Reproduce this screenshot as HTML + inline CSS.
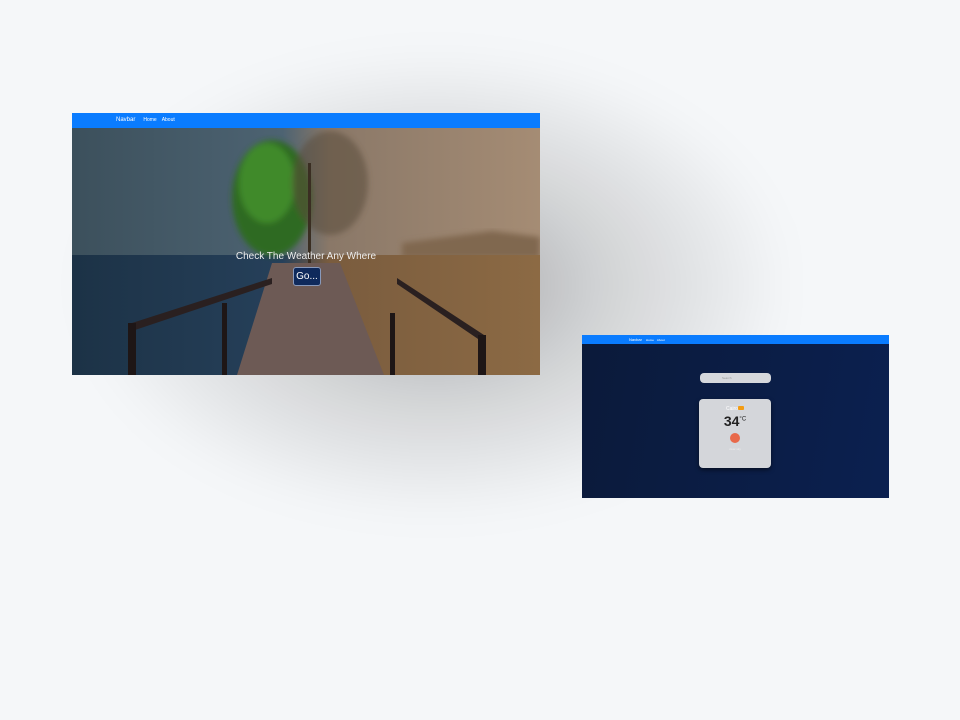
<!DOCTYPE html>
<html><head><meta charset="utf-8"><style>
body{margin:0;width:960px;height:720px;background:#f5f7f9;position:relative;overflow:hidden;font-family:"Liberation Sans",sans-serif}
.sh{position:absolute;left:60px;top:50px;width:720px;height:470px;background:radial-gradient(ellipse 50% 50% at 52% 50%,rgba(0,0,0,.34),rgba(0,0,0,.15) 45%,rgba(0,0,0,0) 100%);filter:blur(20px)}
.a{position:absolute;left:72px;top:113px;width:468px;height:262px;overflow:hidden}
.nav{position:absolute;left:0;top:0;width:100%;background:#0a7cff;color:#fff}
.b{position:absolute;left:582px;top:335px;width:307px;height:163px;background:linear-gradient(100deg,#0b1a3a,#0b2050);overflow:hidden}
</style></head><body>
<div class="sh"></div>
<div class="a">
<svg width="468" height="262" viewBox="0 0 468 262" style="position:absolute;left:0;top:0">
<defs>
<linearGradient id="sky" x1="0" x2="1"><stop offset="0" stop-color="#3c505c"/><stop offset=".45" stop-color="#4d6372"/><stop offset=".55" stop-color="#8a7868"/><stop offset="1" stop-color="#a58c74"/></linearGradient>
<linearGradient id="gr" x1="0" x2="1"><stop offset="0" stop-color="#1c3246"/><stop offset=".45" stop-color="#26405a"/><stop offset=".55" stop-color="#7a5c3e"/><stop offset="1" stop-color="#8c6a44"/></linearGradient>
<filter id="bl"><feGaussianBlur stdDeviation="3"/></filter>
</defs>
<rect width="468" height="145" fill="url(#sky)"/>
<path d="M330 130 L420 118 L468 124 L468 145 L330 145Z" fill="#80684f" filter="url(#bl)"/>
<rect y="142" width="468" height="120" fill="url(#gr)"/>
<g filter="url(#bl)">
<ellipse cx="200" cy="85" rx="40" ry="58" fill="#2f6a22"/>
<ellipse cx="195" cy="70" rx="28" ry="40" fill="#3f8a2c"/>
<ellipse cx="258" cy="70" rx="38" ry="52" fill="#5a4a3a" opacity=".55"/>
</g>
<rect x="236" y="50" width="3" height="100" fill="#3a2e22"/>
<path d="M200 150 L268 150 L312 262 L165 262Z" fill="#6d5a55"/>
<path d="M60 210 L200 165 L200 171 L60 218Z M325 165 L412 222 L412 230 L325 171Z" fill="#2a2020"/>
<rect x="56" y="210" width="8" height="52" fill="#1e1616"/>
<rect x="406" y="222" width="8" height="40" fill="#1e1616"/>
<rect x="150" y="190" width="5" height="72" fill="#1e1616"/>
<rect x="318" y="200" width="5" height="62" fill="#1e1616"/>
</svg>
<div class="nav" style="height:15px;font-size:5px;line-height:15px"><span style="margin-left:44px;font-size:6px">Navbar</span><span style="margin-left:8px">Home</span><span style="margin-left:5px">About</span></div>
<div style="position:absolute;left:0;width:468px;top:138px;text-align:center;color:#eee;font-size:10px">Check The Weather Any Where</div>
<div style="position:absolute;left:221px;top:154px;width:26px;height:17px;background:#0f2a5c;border:1px solid #8899bb;border-radius:3px;color:#fff;font-size:10px;line-height:17px;text-align:center">Go...</div>
</div>
<div class="b">
<div class="nav" style="height:9px;font-size:3px;line-height:9px"><span style="margin-left:47px;font-size:4px">Navbar</span><span style="margin-left:4px">Home</span><span style="margin-left:3px">About</span></div>
<div style="position:absolute;left:118px;top:38px;width:71px;height:10px;background:#d6d8dc;border-radius:4px;font-size:3px;color:#999;line-height:10px;padding-left:22px;box-sizing:border-box">Search</div>
<div style="position:absolute;left:117px;top:64px;width:72px;height:69px;background:#d4d6da;border-radius:4px;box-shadow:0 2px 4px rgba(0,0,0,.5);text-align:center">
<div style="margin-top:7px;font-size:5px;color:#fff">Cairo<span style="display:inline-block;width:6px;height:4px;background:#f39c12;border-radius:1px"></span></div>
<div style="font-size:14px;font-weight:bold;color:#222;margin-top:1px">34<sup style="font-size:6px;font-weight:normal">°C</sup></div>
<div style="width:10px;height:10px;border-radius:50%;background:#e8694a;margin:4px auto 0"></div>
<div style="font-size:3px;color:#eee;margin-top:4px">clear sky</div>
</div>
</div>
</body></html>
